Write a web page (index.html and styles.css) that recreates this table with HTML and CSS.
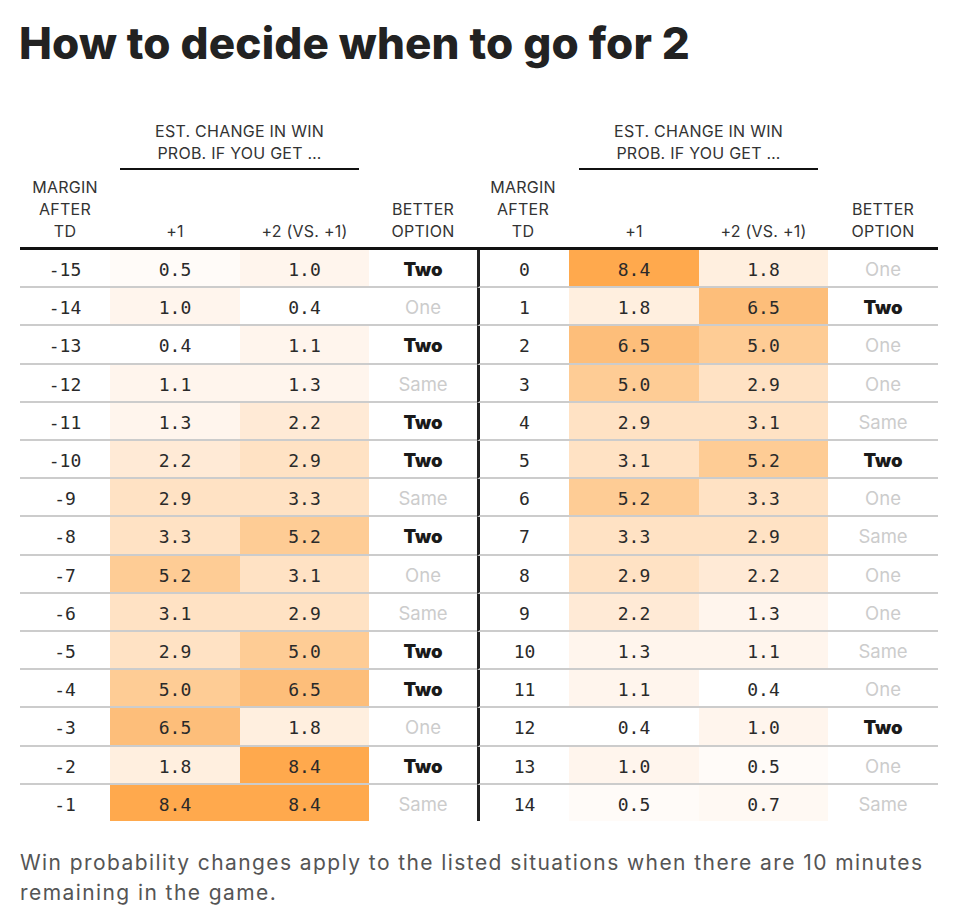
FILE: index.html
```html
<!DOCTYPE html>
<html lang="en">
<head>
<meta charset="utf-8">
<title>How to decide when to go for 2</title>
<link rel="stylesheet" href="styles.css">
</head>
<body>
<div class="page">
  <h1 class="title">How to decide when to go for 2</h1>
  <div class="chart">
    <table class="tbl tbl-left">
      <colgroup><col class="c-margin"><col class="c-val"><col class="c-val2"><col class="c-opt"></colgroup>
      <thead>
        <tr class="hr1"><th></th><th colspan="2"><div class="span-label">Est. change in win<br>prob. if you get …</div></th><th></th></tr>
        <tr class="hr2"><th>Margin<br>after<br>TD</th><th>+1</th><th>+2 (vs. +1)</th><th>Better<br>option</th></tr>
      </thead>
      <tbody>
        <tr><td class="m">-15</td><td class="n v05">0.5</td><td class="n v1">1.0</td><td class="o two">Two</td></tr>
        <tr><td class="m">-14</td><td class="n v1">1.0</td><td class="n v04">0.4</td><td class="o">One</td></tr>
        <tr><td class="m">-13</td><td class="n v04">0.4</td><td class="n v1">1.1</td><td class="o two">Two</td></tr>
        <tr><td class="m">-12</td><td class="n v1">1.1</td><td class="n v1">1.3</td><td class="o">Same</td></tr>
        <tr><td class="m">-11</td><td class="n v1">1.3</td><td class="n v22">2.2</td><td class="o two">Two</td></tr>
        <tr><td class="m">-10</td><td class="n v22">2.2</td><td class="n v3">2.9</td><td class="o two">Two</td></tr>
        <tr><td class="m">-9</td><td class="n v3">2.9</td><td class="n v3">3.3</td><td class="o">Same</td></tr>
        <tr><td class="m">-8</td><td class="n v3">3.3</td><td class="n v5">5.2</td><td class="o two">Two</td></tr>
        <tr><td class="m">-7</td><td class="n v5">5.2</td><td class="n v3">3.1</td><td class="o">One</td></tr>
        <tr><td class="m">-6</td><td class="n v3">3.1</td><td class="n v3">2.9</td><td class="o">Same</td></tr>
        <tr><td class="m">-5</td><td class="n v3">2.9</td><td class="n v5">5.0</td><td class="o two">Two</td></tr>
        <tr><td class="m">-4</td><td class="n v5">5.0</td><td class="n v65">6.5</td><td class="o two">Two</td></tr>
        <tr><td class="m">-3</td><td class="n v65">6.5</td><td class="n v18">1.8</td><td class="o">One</td></tr>
        <tr><td class="m">-2</td><td class="n v18">1.8</td><td class="n v84">8.4</td><td class="o two">Two</td></tr>
        <tr><td class="m">-1</td><td class="n v84">8.4</td><td class="n v84">8.4</td><td class="o">Same</td></tr>
      </tbody>
    </table>
    <table class="tbl tbl-right">
      <colgroup><col class="c-margin-r"><col class="c-val"><col class="c-val2"><col class="c-opt-r"></colgroup>
      <thead>
        <tr class="hr1"><th></th><th colspan="2"><div class="span-label">Est. change in win<br>prob. if you get …</div></th><th></th></tr>
        <tr class="hr2"><th>Margin<br>after<br>TD</th><th>+1</th><th>+2 (vs. +1)</th><th>Better<br>option</th></tr>
      </thead>
      <tbody>
        <tr><td class="m">0</td><td class="n v84">8.4</td><td class="n v18">1.8</td><td class="o">One</td></tr>
        <tr><td class="m">1</td><td class="n v18">1.8</td><td class="n v65">6.5</td><td class="o two">Two</td></tr>
        <tr><td class="m">2</td><td class="n v65">6.5</td><td class="n v5">5.0</td><td class="o">One</td></tr>
        <tr><td class="m">3</td><td class="n v5">5.0</td><td class="n v3">2.9</td><td class="o">One</td></tr>
        <tr><td class="m">4</td><td class="n v3">2.9</td><td class="n v3">3.1</td><td class="o">Same</td></tr>
        <tr><td class="m">5</td><td class="n v3">3.1</td><td class="n v5">5.2</td><td class="o two">Two</td></tr>
        <tr><td class="m">6</td><td class="n v5">5.2</td><td class="n v3">3.3</td><td class="o">One</td></tr>
        <tr><td class="m">7</td><td class="n v3">3.3</td><td class="n v3">2.9</td><td class="o">Same</td></tr>
        <tr><td class="m">8</td><td class="n v3">2.9</td><td class="n v22">2.2</td><td class="o">One</td></tr>
        <tr><td class="m">9</td><td class="n v22">2.2</td><td class="n v1">1.3</td><td class="o">One</td></tr>
        <tr><td class="m">10</td><td class="n v1">1.3</td><td class="n v1">1.1</td><td class="o">Same</td></tr>
        <tr><td class="m">11</td><td class="n v1">1.1</td><td class="n v04">0.4</td><td class="o">One</td></tr>
        <tr><td class="m">12</td><td class="n v04">0.4</td><td class="n v1">1.0</td><td class="o two">Two</td></tr>
        <tr><td class="m">13</td><td class="n v1">1.0</td><td class="n v05">0.5</td><td class="o">One</td></tr>
        <tr><td class="m">14</td><td class="n v05">0.5</td><td class="n v07">0.7</td><td class="o">Same</td></tr>
      </tbody>
    </table>
  </div>
  <p class="note">Win probability changes apply to the listed situations when there are 10 minutes remaining in the game.</p>
</div>
</body>
</html>
```

FILE: styles.css
```css
body {
  margin: 0;
  background: #ffffff;
  font-family: Inter, "Noto Sans", sans-serif;
  color: #222222;
}

.page {
  padding: 0 18px 0 20px;
}

.title {
  margin: 17px 0 0 -1px;
  font-size: 44px;
  line-height: 52px;
  font-weight: 800;
  letter-spacing: 0.15px;
  color: #222222;
}

.chart {
  display: flex;
  margin-top: 51px;
}

.tbl {
  border-collapse: separate;
  border-spacing: 0;
  table-layout: fixed;
}

.tbl-left { width: 457px; }
.tbl-right { width: 461px; }

.c-margin { width: 90px; }
.c-margin-r { width: 92px; }
.c-val { width: 130px; }
.c-val2 { width: 129px; }
.c-opt { width: 108px; }
.c-opt-r { width: 110px; }

.tbl th {
  padding: 0;
  font-size: 16px;
  line-height: 22px;
  font-weight: 400;
  letter-spacing: 0.25px;
  text-transform: uppercase;
  color: #333333;
  text-align: center;
  vertical-align: bottom;
}

.span-label {
  margin: 0 10px;
  padding-bottom: 4px;
  border-bottom: 2px solid #111111;
}

.hr2 th {
  padding: 6px 0 5px;
  border-bottom: 3px solid #111111;
}

.tbl td {
  padding: 3px 0 0;
  line-height: 33.2px;
  text-align: center;
  border-bottom: 2px solid #cccccc;
}

.tbl tbody tr:last-child td {
  border-bottom: none;
}

.tbl-right td.m {
  border-left: 3px solid #222222;
}

.m, .n {
  font-family: "DejaVu Sans Mono", "Liberation Mono", monospace;
  font-size: 18px;
  color: #2a2a2a;
}

.o {
  font-size: 18.5px;
  color: #cccccc;
}

.o.two {
  font-weight: 900;
  color: #1a1a1a;
}

.v04 { background: #ffffff; }
.v05 { background: #fffbf8; }
.v07 { background: #fff9f3; }
.v1 { background: #fff5ed; }
.v18 { background: #ffefdf; }
.v22 { background: #ffead6; }
.v3 { background: #ffe2c4; }
.v5 { background: #fecc95; }
.v65 { background: #fdbe7a; }
.v84 { background: #ffa94d; }

.note {
  margin: 27px 0 0;
  font-size: 21px;
  line-height: 30px;
  letter-spacing: 1.42px;
  color: #555555;
}
```
